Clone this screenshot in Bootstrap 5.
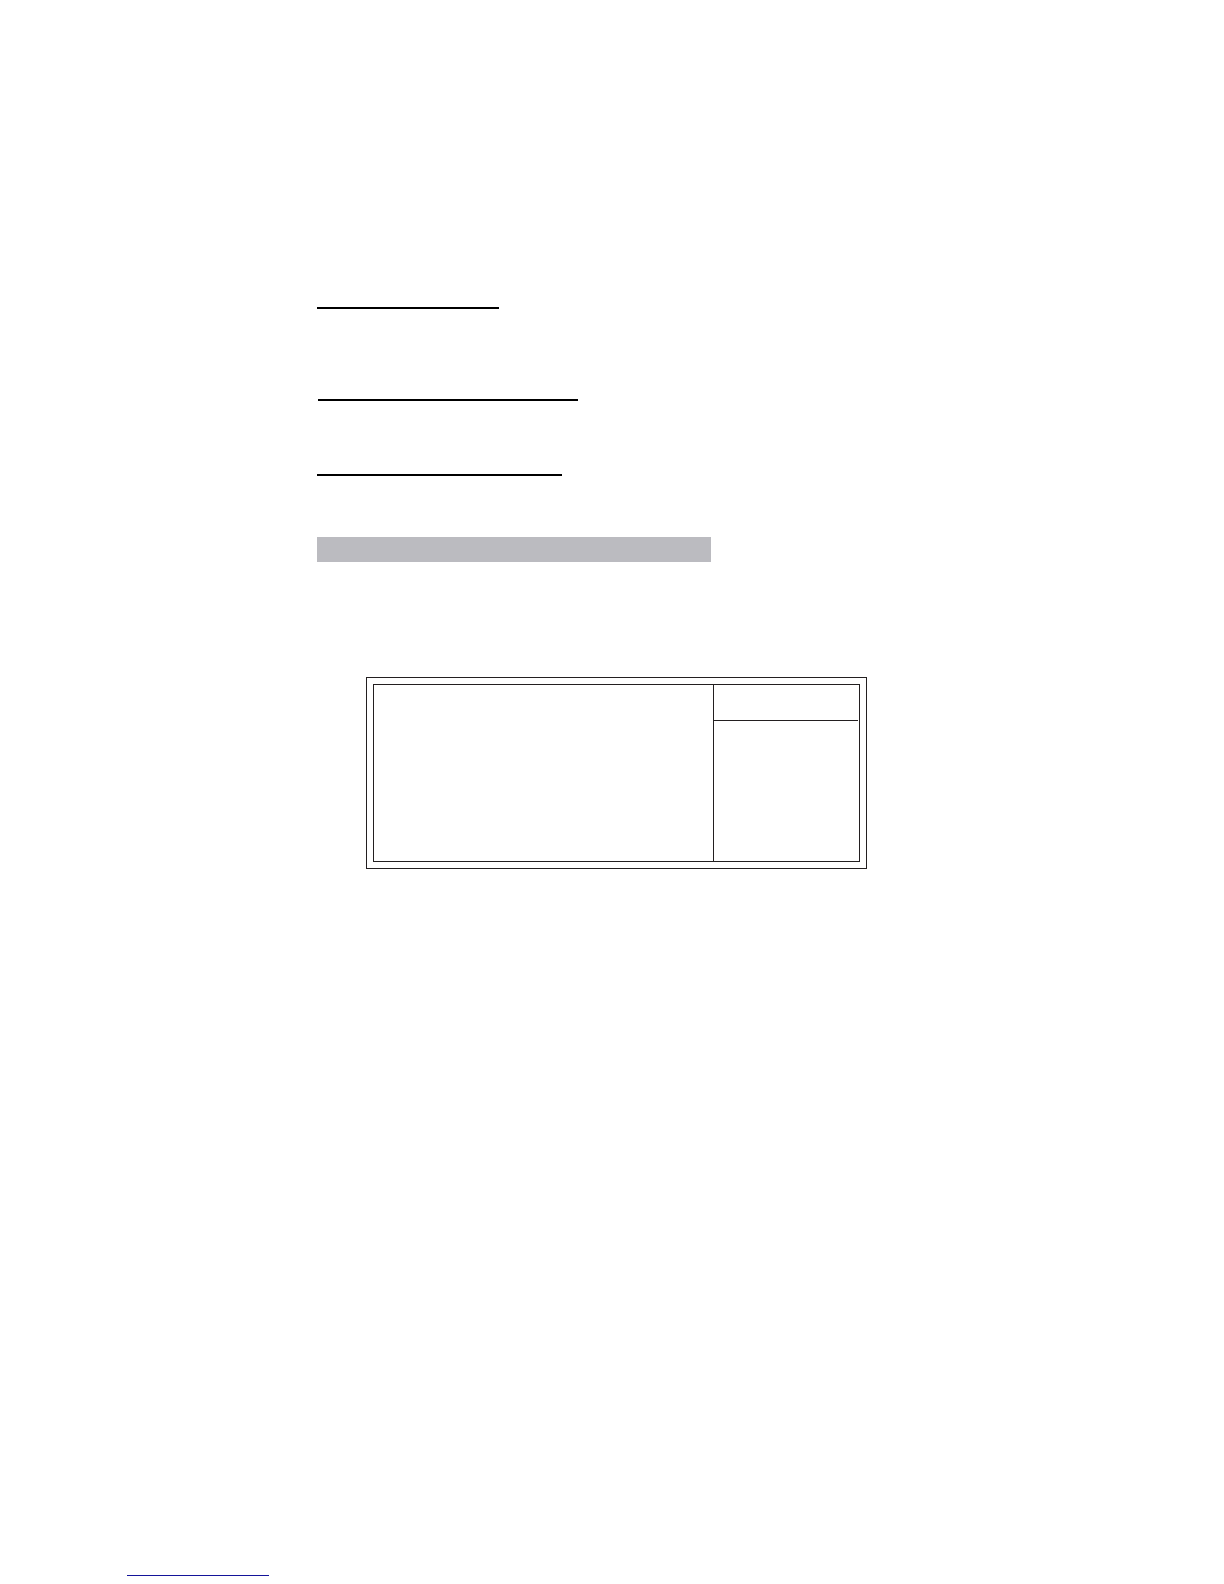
<!DOCTYPE html>
<html lang="en">
<head>
<meta charset="utf-8">
<meta name="viewport" content="width=device-width, initial-scale=1">
<title>Document page</title>
<link href="https://cdn.jsdelivr.net/npm/bootstrap@5.3.0/dist/css/bootstrap.min.css" rel="stylesheet">
<style>
  body { font-family: "Liberation Sans", Arial, sans-serif; }
  .sheet { padding: 307px 125px 0 317px; }
  .rule { border-top: 2px solid #000; opacity: 1; max-width: 100%; margin: 0; }
  .rule-short { width: 182px; margin-bottom: 90px; }
  .rule-long { width: 260px; margin-left: 1px; margin-bottom: 73px; }
  .rule-medium { width: 245px; margin-bottom: 61px; }
  .band { height: 25px; width: 100%; max-width: 394px; background: #bbbbc0; margin-bottom: 115px; }
  /* Double frame: options pane on the left, help pane on the right */
  .frame { max-width: 501px; margin-left: 49px; padding: 6px; border: 1px solid #231f20; }
  .panes { min-height: 178px; border: 1px solid #231f20; }
  .help-pane { flex: 0 0 146px; border-left: 1px solid #231f20; }
  .help-title { height: 36px; margin-right: 1px; border-bottom: 1px solid #231f20; }
  .footer-rule { width: 142px; height: 1px; margin: 0 0 0 127px; border: 0; background: #14149a; opacity: 1; }
</style>
<script src="https://cdn.jsdelivr.net/npm/bootstrap@5.3.0/dist/js/bootstrap.bundle.min.js" defer></script>
</head>
<body class="bg-white d-flex flex-column min-vh-100">
  <main class="sheet">
    <hr class="rule rule-short">
    <hr class="rule rule-long">
    <hr class="rule rule-medium">
    <div class="band"></div>
    <div class="frame">
      <div class="panes d-flex">
        <div class="flex-grow-1"></div>
        <div class="help-pane">
          <div class="help-title"></div>
        </div>
      </div>
    </div>
  </main>
  <footer class="mt-auto pb-2">
    <hr class="footer-rule">
  </footer>
</body>
</html>
